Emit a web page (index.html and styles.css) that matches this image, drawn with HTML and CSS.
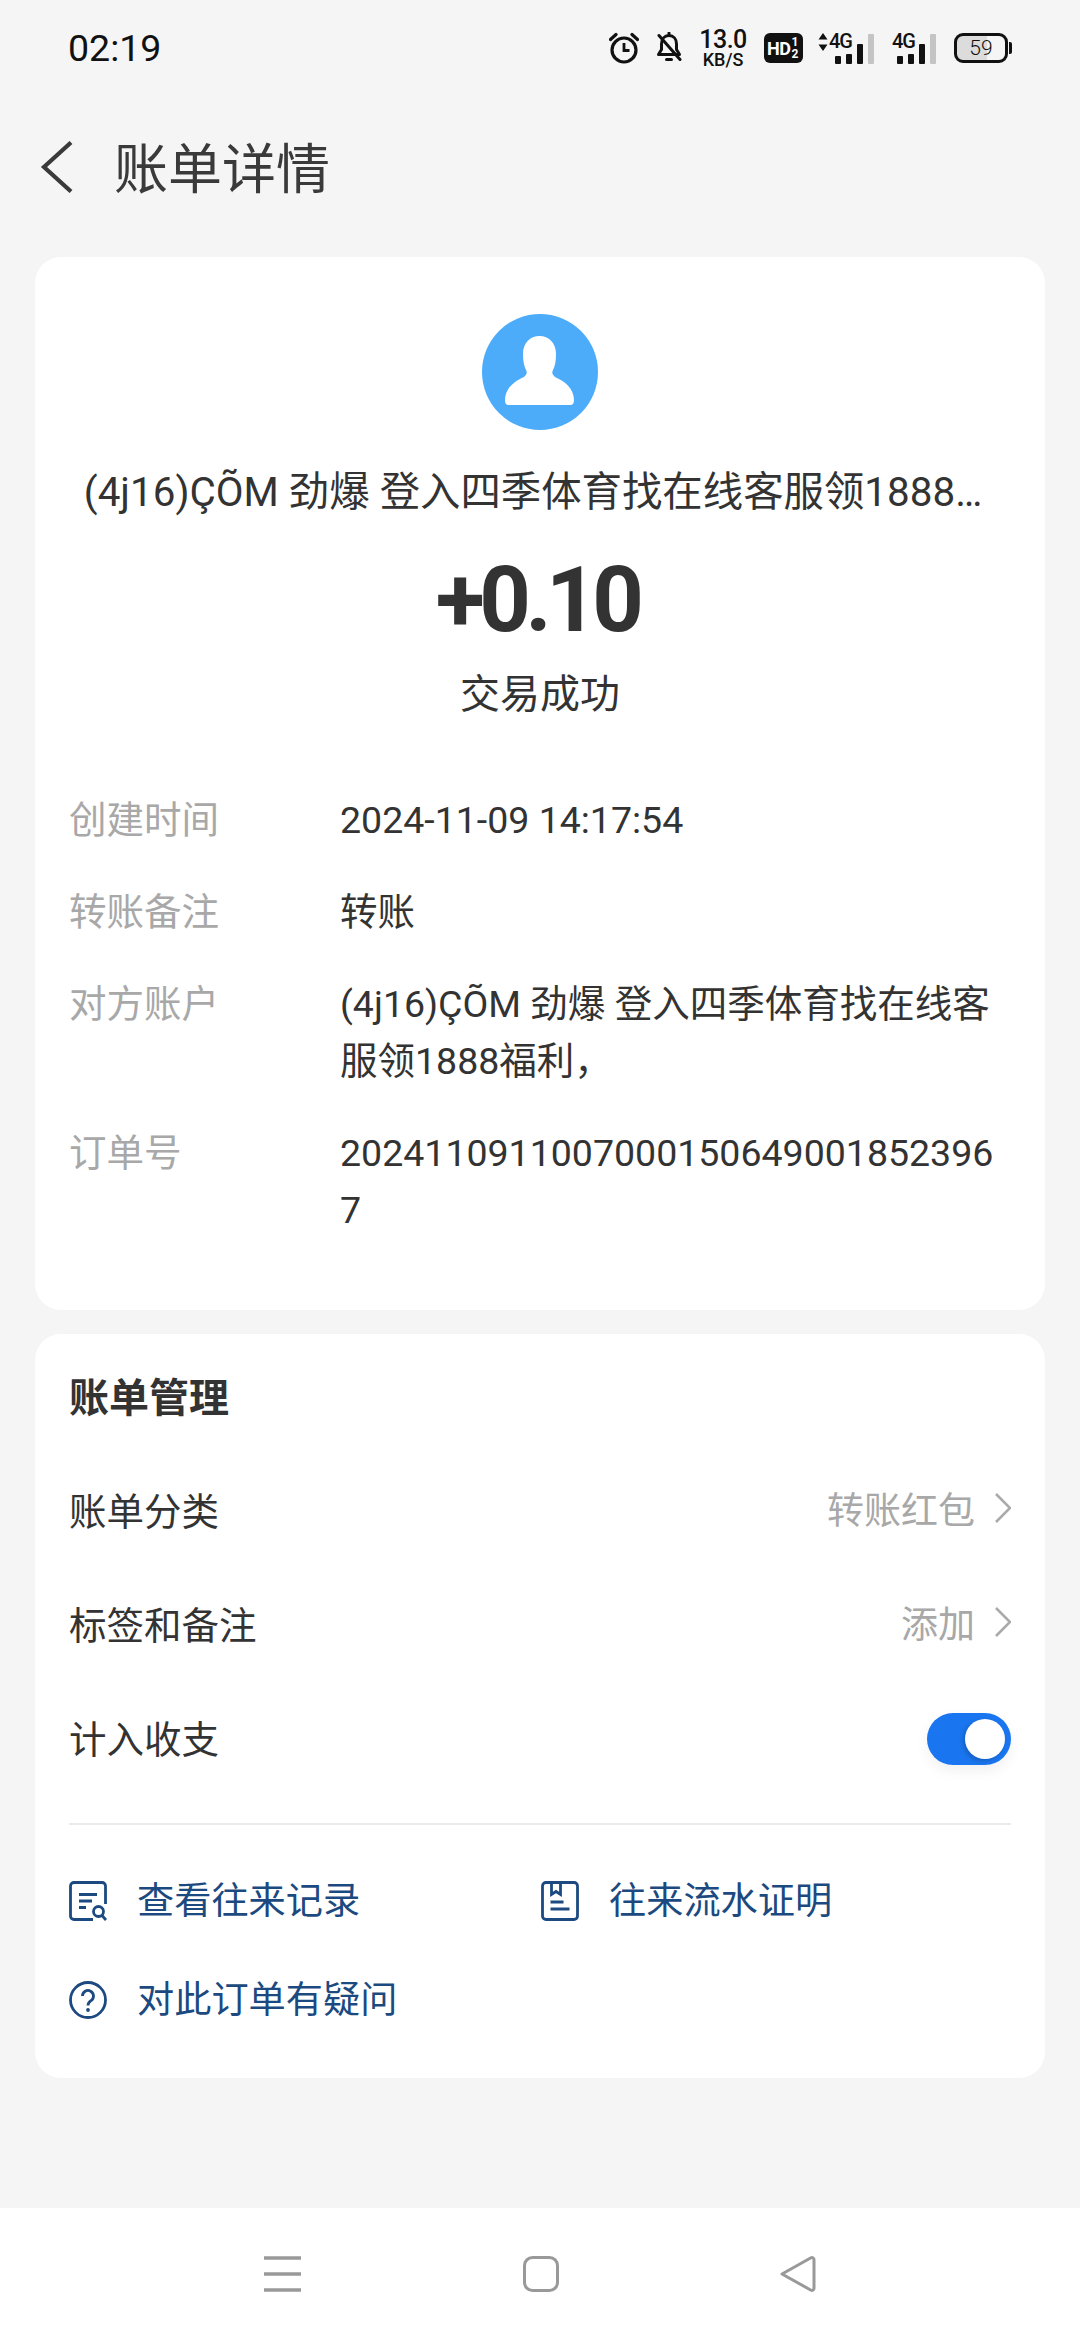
FILE: index.html
```html
<!DOCTYPE html>
<html lang="zh-CN">
<head>
    <meta charset="UTF-8">
    <meta name="viewport" content="width=device-width, initial-scale=1.0">
    <title>账单详情</title>
    <link rel="stylesheet" href="styles.css">
</head>
<body>
    <!-- Status bar -->
    <div class="status-bar">
        <span class="clock">02:19</span>
        <div class="status-icons">
            <svg class="ic-alarm" width="30" height="32" viewBox="0 0 30 32" fill="none" stroke="#111" stroke-width="3.2">
                <circle cx="15" cy="18" r="12"/>
                <path d="M15 11v7.5h5.5" stroke-width="2.8"/>
                <path d="M1.5 7.5 7 2.5M28.5 7.5 23 2.5" stroke-linecap="round"/>
            </svg>
            <svg class="ic-bell" width="26" height="32" viewBox="0 0 26 32" fill="none" stroke="#111" stroke-width="3">
                <path d="M5.5 12c0-5 3-8.5 7.5-8.5s7.5 3.5 7.5 8.5v5.5l3 5H2.5l3-5z" stroke-linejoin="round"/>
                <path d="M13 1v2.5M10.5 27.5h5M3 3.5l21 24" stroke-linecap="round"/>
            </svg>
            <div class="net-speed">
                <span class="net-num">13.0</span>
                <span class="net-unit">KB/S</span>
            </div>
            <div class="hd-badge"><span>HD</span><span class="hd-sub"><i>1</i><i>2</i></span></div>
            <div class="signal signal-first">
                <svg class="updown" width="10" height="18" viewBox="0 0 10 18" fill="#111">
                    <path d="M5 0l4.5 6.5h-9zM5 18 .5 11.5h9z"/>
                </svg>
                <span class="net-type">4G</span>
                <div class="bars">
                    <i class="bar b1"></i><i class="bar b2"></i><i class="bar b3"></i><i class="bar b4"></i>
                </div>
            </div>
            <div class="signal">
                <span class="net-type">4G</span>
                <div class="bars">
                    <i class="bar b1"></i><i class="bar b2"></i><i class="bar b3"></i><i class="bar b4"></i>
                </div>
            </div>
            <div class="battery">
                <div class="battery-body"><span>59</span></div>
                <i class="battery-cap"></i>
            </div>
        </div>
    </div>

    <!-- Title bar -->
    <header class="title-bar">
        <svg class="back" width="34" height="52" viewBox="0 0 34 52" fill="none" stroke="#3a3a3a" stroke-width="4.2">
            <path d="M31 1.5 4 26l27 24.5"/>
        </svg>
        <h1>账单详情</h1>
    </header>

    <main class="content">
        <section class="card card-detail">
            <svg class="avatar" width="116" height="116" viewBox="0 0 116 116">
                <circle cx="58" cy="58" r="58" fill="#4dacfa"/>
                <path fill="#fff" d="M57.5 22C48 22 41 29 41 40c0 7 1 12 3 16 1.5 3 .5 5-2 7-9 4-19 11-19 23 0 3 1 5 4 5h61c3 0 4-2 4-5 0-12-10-19-19-23-2.5-2-3.5-4-2-7 2-4 3-9 3-16 0-11-7-18-16.5-18z"/>
            </svg>
            <div class="payee">(4j16)ÇÕM 劲爆 登入四季体育找在线客服领1888…</div>
            <div class="amount">+0.10</div>
            <div class="state">交易成功</div>

            <dl class="details">
                <div class="detail-row">
                    <dt>创建时间</dt>
                    <dd>2024-11-09 14:17:54</dd>
                </div>
                <div class="detail-row">
                    <dt>转账备注</dt>
                    <dd>转账</dd>
                </div>
                <div class="detail-row">
                    <dt>对方账户</dt>
                    <dd>(4j16)ÇÕM 劲爆 登入四季体育找在线客服领1888福利，</dd>
                </div>
                <div class="detail-row">
                    <dt>订单号</dt>
                    <dd class="order-no">20241109110070001506490018523967</dd>
                </div>
            </dl>
        </section>

        <section class="card card-manage">
            <h2>账单管理</h2>
            <div class="manage-row">
                <span>账单分类</span>
                <span class="row-value">转账红包
                    <svg width="16" height="30" viewBox="0 0 16 30" fill="none" stroke="#aaa" stroke-width="2.6"><path d="M1 1l14 14L1 29"/></svg>
                </span>
            </div>
            <div class="manage-row">
                <span>标签和备注</span>
                <span class="row-value">添加
                    <svg width="16" height="30" viewBox="0 0 16 30" fill="none" stroke="#aaa" stroke-width="2.6"><path d="M1 1l14 14L1 29"/></svg>
                </span>
            </div>
            <div class="manage-row">
                <span>计入收支</span>
                <div class="toggle"><i class="knob"></i></div>
            </div>
            <hr class="divider">
            <div class="links">
                <a class="link">
                    <svg width="38" height="40" viewBox="0 0 38 40" fill="none" stroke="#1c4a80" stroke-width="2.8">
                        <path d="M24 38.5H5A3.5 3.5 0 0 1 1.5 35V5A3.5 3.5 0 0 1 5 1.5h28A3.5 3.5 0 0 1 36.5 5v18"/>
                        <path d="M10 13.5h18M10 20h13M10 26.5h7"/>
                        <circle cx="29.5" cy="30.5" r="5"/>
                        <path d="M33 34.5l4 4.5"/>
                    </svg>
                    <span>查看往来记录</span>
                </a>
                <a class="link">
                    <svg width="38" height="40" viewBox="0 0 38 40" fill="none" stroke="#1c4a80" stroke-width="2.8">
                        <rect x="1.5" y="1.5" width="35" height="37" rx="3.5"/>
                        <path d="M10.5 2v11.5l4.5-3 4.5 3V2M9.5 21h13M9.5 28h19"/>
                    </svg>
                    <span>往来流水证明</span>
                </a>
                <a class="link">
                    <svg width="38" height="40" viewBox="0 0 38 40" fill="none" stroke="#1c4a80" stroke-width="2.8">
                        <circle cx="19" cy="20" r="17.5"/>
                        <path d="M13.5 16a5.5 5.5 0 1 1 8.5 4.6c-2 1.4-3 2.4-3 4.9"/>
                        <circle cx="19" cy="30" r="1.9" fill="#1c4a80" stroke="none"/>
                    </svg>
                    <span>对此订单有疑问</span>
                </a>
            </div>
        </section>
    </main>

    <!-- Navigation keys -->
    <nav class="nav-bar">
        <svg width="37" height="36" viewBox="0 0 37 36" fill="none" stroke="#999" stroke-width="3.4"><path d="M0 2h37M0 18h37M0 34h37"/></svg>
        <svg width="36" height="36" viewBox="0 0 36 36" fill="none" stroke="#999" stroke-width="3"><rect x="1.5" y="1.5" width="33" height="33" rx="8"/></svg>
        <svg width="36" height="36" viewBox="0 0 36 36" fill="none" stroke="#999" stroke-width="3" stroke-linejoin="round"><path d="M2 18 31 1.8c1.5-.6 3 .4 3 2v28.400c0 1.600-1.500 2.600-3 2z"/></svg>
    </nav>
</body>
</html>
```

FILE: styles.css
```css
* {
    box-sizing: border-box;
}
body {
    margin: 0;
    width: 1080px;
    height: 2340px;
    display: flex;
    flex-direction: column;
    overflow: hidden;
    background-color: #f5f5f5;
    color: #333;
    font-family: Roboto, "Noto Sans CJK SC", sans-serif;
    font-size: 37.5px;
}

/* status bar */
.status-bar {
    height: 96px;
    padding: 0 69px 0 68px;
    display: flex;
    align-items: center;
    justify-content: space-between;
    color: #111;
}
.clock {
    font-size: 37.5px;
}
.status-icons {
    display: flex;
    align-items: center;
}
.status-icons i {
    display: block;
}
.ic-alarm {
    margin-right: 17px;
}
.ic-bell {
    margin-right: 19px;
}
.net-speed {
    width: 44px;
    margin-right: 19px;
    display: flex;
    flex-direction: column;
    align-items: center;
    font-weight: 500;
}
.net-num {
    font-size: 25px;
    line-height: 24px;
    letter-spacing: -0.5px;
}
.net-unit {
    font-size: 18px;
    line-height: 16px;
}
.hd-badge {
    width: 39px;
    height: 30px;
    margin-right: 15px;
    padding-left: 3px;
    display: flex;
    align-items: center;
    background-color: #111;
    border-radius: 6px;
    color: #fff;
    font-size: 18px;
    font-weight: 700;
    letter-spacing: -0.5px;
}
.hd-sub {
    font-size: 12px;
    line-height: 12px;
    margin-left: 1px;
}
.hd-sub i {
    font-style: normal;
}
.signal {
    position: relative;
    height: 32px;
    display: flex;
    width: 44px;
    margin-right: 18px;
}
.signal-first {
    width: 56px;
}
.updown {
    margin: 1px 1px 0 0;
}
.net-type {
    font-size: 20px;
    font-weight: 500;
    line-height: 18px;
    height: 18px;
    letter-spacing: -1px;
}
.bars {
    position: absolute;
    right: 0;
    bottom: 0;
    display: flex;
    align-items: flex-end;
    gap: 5px;
}
.bar {
    width: 6px;
    border-radius: 1px;
    background-color: #111;
}
.b1 {
    height: 8px;
}
.b2 {
    height: 10px;
}
.b3 {
    height: 20px;
}
.b4 {
    height: 30px;
    background-color: #c4c4c4;
}
.battery {
    display: flex;
    align-items: center;
    margin-right: -1px;
}
.battery-body {
    width: 54px;
    height: 30px;
    border: 3px solid #111;
    border-radius: 9px;
    background: linear-gradient(to right, #dcdcdc 62%, transparent 62%);
    display: flex;
    align-items: center;
    justify-content: center;
    font-size: 21px;
    font-weight: 300;
}
.battery-cap {
    width: 3px;
    height: 12px;
    margin-left: 1px;
    background-color: #111;
    border-radius: 0 2px 2px 0;
}

/* title bar */
.title-bar {
    height: 142px;
    padding-left: 40px;
    display: flex;
    align-items: center;
}
.title-bar h1 {
    margin: -3px 0 0 40px;
    font-size: 54px;
    font-weight: 400;
    color: #3a3a3a;
}

.content {
    flex: 1;
    padding: 19px 35px 0;
}
.card {
    background-color: #fff;
    border-radius: 26px;
}

/* transaction card */
.card-detail {
    height: 1053px;
    padding-top: 57px;
    display: flex;
    flex-direction: column;
    align-items: center;
}
.avatar {
    flex: none;
}
.payee {
    width: 940px;
    margin-top: 38px;
    padding-right: 14px;
    font-size: 40.4px;
    line-height: 50px;
    text-align: center;
}
.amount {
    margin: 33px 6px 0 0;
    font-size: 90px;
    line-height: 100px;
    font-weight: 700;
    letter-spacing: -5.5px;
}
.state {
    margin-top: 19px;
    font-size: 40px;
    line-height: 50px;
}
.details {
    width: 100%;
    margin: 72px 0 0;
    padding: 0 34px;
    display: flex;
    flex-direction: column;
    gap: 35px;
}
.detail-row {
    display: flex;
    line-height: 57px;
}
.detail-row dt {
    width: 271px;
    flex: none;
    color: #a8a8a8;
}
.detail-row dd {
    margin: 0;
    flex: 1;
}
.order-no {
    word-break: break-all;
}

/* bill management card */
.card-manage {
    margin-top: 24px;
    height: 744px;
    padding: 40px 34px 0;
}
.card-manage h2 {
    margin: 0 0 27px;
    font-size: 40px;
    line-height: 50px;
    font-weight: 700;
}
.manage-row {
    height: 114px;
    display: flex;
    align-items: center;
    justify-content: space-between;
}
.row-value {
    display: flex;
    align-items: center;
    gap: 20px;
    font-size: 37px;
    color: #a8a8a8;
}
.toggle {
    width: 84px;
    height: 52px;
    margin-top: 6px;
    padding-right: 6px;
    display: flex;
    align-items: center;
    justify-content: flex-end;
    background-color: #1a76f0;
    border-radius: 26px;
    box-shadow: 0 6px 14px rgba(0, 0, 0, 0.06);
}
.knob {
    display: block;
    width: 40px;
    height: 40px;
    background-color: #fff;
    border-radius: 50%;
    box-shadow: -2px 2px 5px rgba(0, 0, 0, 0.2);
}
.divider {
    margin: 30px 0 0;
    border: none;
    border-top: 2px solid #eaeaea;
}
.links {
    margin-top: 43px;
    display: grid;
    grid-template-columns: 472px 1fr;
    row-gap: 39px;
}
.link {
    height: 60px;
    display: flex;
    align-items: center;
    gap: 30px;
    font-size: 37.2px;
    color: #1c4a80;
}
.link svg {
    margin-top: 5px;
}

/* bottom keys */
.nav-bar {
    height: 132px;
    padding: 48px 264px 0;
    display: flex;
    align-items: flex-start;
    justify-content: space-between;
    background-color: #fff;
}
```
